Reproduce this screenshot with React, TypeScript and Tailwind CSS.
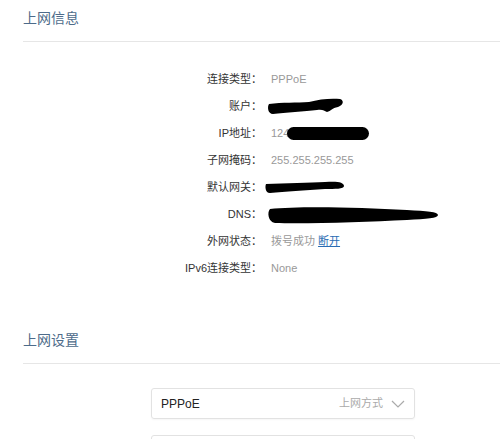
import React from 'react';

const font = { fontFamily: '"Liberation Sans", "Noto Sans CJK SC", sans-serif' };

function SectionTitle({ title }: { title: string }) {
  return (
    <div className="ml-[23px] border-b border-[#e6e6e6] pt-[8px] pb-[13px]">
      <h2 className="text-[14px] leading-[20px] text-[#4d6b8a]">{title}</h2>
    </div>
  );
}

// 涂抹遮挡的部分
function AccountBlob() {
  return (
    <svg width="77" height="17" viewBox="0 0 77 17" className="-ml-[4px]">
      <path d="M2 6 C 15 4, 30 5, 42 4 C 52 1, 65 0, 73 1 C 77 2, 77 7, 71 9 C 65 10, 64 13, 60 14 C 57 13, 56 11, 50 12 C 38 13, 18 15, 6 16 C 1 16, 0 9, 2 6 Z" fill="#000" />
    </svg>
  );
}

function GatewayBlob() {
  return (
    <svg width="80" height="13" viewBox="0 0 80 13" className="-ml-[6px]">
      <path d="M1 3 C 20 2, 45 2, 60 1 C 72 0, 79 1, 79 5 C 79 8, 70 8, 60 8 C 40 9, 20 11, 5 12 C 0 12, 0 5, 1 3 Z" fill="#000" />
    </svg>
  );
}

function DnsBlob() {
  return (
    <svg width="172" height="18" viewBox="0 0 172 18" className="-ml-[4px]">
      <path d="M3 3 C 30 0, 90 1, 140 4 C 160 5, 171 6, 171 9 C 171 12, 160 13, 140 14 C 100 16, 40 18, 8 17 C 1 16, 0 6, 3 3 Z" fill="#000" />
    </svg>
  );
}

const rows: { label: string; value: React.ReactNode }[] = [
  { label: '连接类型', value: <span>PPPoE</span> },
  { label: '账户', value: <AccountBlob /> },
  {
    label: 'IP地址',
    value: (
      <span className="flex items-center">
        124
        <span className="-ml-[2px] inline-block h-[13px] w-[82px] rounded-full bg-black" />
      </span>
    ),
  },
  { label: '子网掩码', value: <span>255.255.255.255</span> },
  { label: '默认网关', value: <GatewayBlob /> },
  { label: 'DNS', value: <DnsBlob /> },
  {
    label: '外网状态',
    value: (
      <span>
        拨号成功 <a href="#" className="text-[#2a6cb3] underline">断开</a>
      </span>
    ),
  },
  { label: 'IPv6连接类型', value: <span>None</span> },
];

export default function App() {
  return (
    <div className="h-[439px] w-[500px] overflow-hidden bg-white" style={font}>
      <SectionTitle title="上网信息" />
      <div className="mt-[24px] grid grid-cols-[262px_1fr] gap-x-[9px]">
        {rows.map(row => (
          <React.Fragment key={row.label}>
            <div className="flex h-[27px] items-center justify-end text-[11px] text-[#333]">
              {row.label}：
            </div>
            <div className="flex h-[27px] items-center text-[11px] text-[#999]">{row.value}</div>
          </React.Fragment>
        ))}
      </div>
      <div className="mt-[40px]">
        <SectionTitle title="上网设置" />
      </div>
      <div className="ml-[151px] mt-[24px] w-[264px]">
        <div className="flex h-[31px] items-center justify-between rounded-[3px] border border-[#e2e2e2] px-[9px] shadow-[0_1px_2px_rgba(0,0,0,0.04)]">
          <span className="text-[12px] text-[#222]">PPPoE</span>
          <span className="flex items-center gap-[8px] text-[11px] text-[#aaa]">
            上网方式
            <svg width="14" height="8" viewBox="0 0 14 8" fill="none" stroke="#aaa" strokeWidth="1.2">
              <path d="M1 1 L7 7 L13 1" />
            </svg>
          </span>
        </div>
        <div className="mt-[16px] h-[31px] rounded-[3px] border border-[#e2e2e2]" />
      </div>
    </div>
  );
}
